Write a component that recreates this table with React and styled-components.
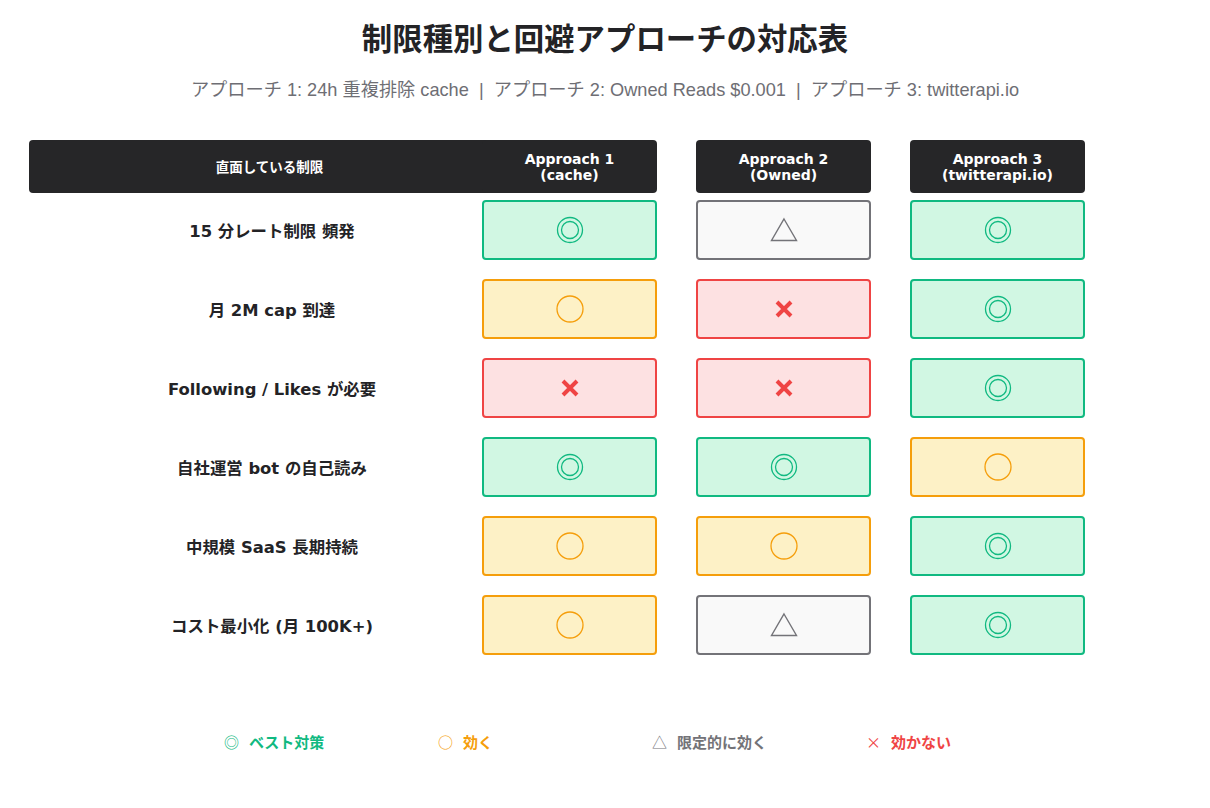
import React from "react";
import styled, { createGlobalStyle } from "styled-components";

const GlobalStyle = createGlobalStyle`
  body {
    margin: 0;
    background: #ffffff;
    font-family: "DejaVu Sans", "Noto Sans CJK JP", sans-serif;
  }
`;

const Page = styled.div`
  width: 1210px;
  height: 808px;
  display: flex;
  flex-direction: column;
  align-items: center;
  background: #ffffff;
`;

const Title = styled.h1`
  margin: 18px 0 0;
  font-family: "Noto Sans CJK JP", sans-serif;
  font-size: 30.4px;
  line-height: 38px;
  font-weight: 700;
  color: #232326;
`;

const Subtitle = styled.p`
  margin: 22px 0 0;
  font-family: "Liberation Sans", "Noto Sans CJK JP", sans-serif;
  font-size: 18.2px;
  line-height: 24px;
  color: #6e6e74;
  white-space: pre;
`;

const Table = styled.div`
  align-self: flex-start;
  margin: 38px 0 0 29px;
  display: flex;
  flex-direction: column;
  gap: 7px;
`;

const Grid = styled.div`
  display: grid;
  grid-template-columns: 414px repeat(3, 175px);
  column-gap: 39px;
  row-gap: 19px;
`;

const HeadCell = styled.div`
  position: relative;
  z-index: ${(p) => (p.$wide ? 0 : 1)};
  height: 53px;
  width: ${(p) => (p.$wide ? "calc(100% + 67px)" : "auto")};
  background: #262628;
  border-radius: 4px;
  color: #ffffff;
  font-weight: 700;
  font-size: ${(p) => (p.$wide ? "13.5px" : "14px")};
  line-height: 16px;
  display: flex;
  flex-direction: column;
  align-items: center;
  justify-content: center;
  text-align: center;
`;

const RowLabel = styled.div`
  width: calc(100% + 72px);
  height: 60px;
  display: flex;
  align-items: center;
  justify-content: center;
  font-size: 16.4px;
  font-weight: 700;
  color: #232326;
`;

const tones = {
  best: { bg: "#d1f7e3", border: "#10b981", fg: "#10b981" },
  good: { bg: "#fdf1c6", border: "#f59e0b", fg: "#f59e0b" },
  part: { bg: "#f9f9f9", border: "#737378", fg: "#737378" },
  none: { bg: "#fde1e2", border: "#ef4444", fg: "#ef4444" },
};

const Cell = styled.div`
  box-sizing: border-box;
  height: 60px;
  border: 2px solid ${(p) => tones[p.$tone].border};
  background: ${(p) => tones[p.$tone].bg};
  border-radius: 4px;
  display: flex;
  align-items: center;
  justify-content: center;
  color: ${(p) => tones[p.$tone].fg};
`;

const Legend = styled.div`
  align-self: flex-start;
  margin: 76px 0 0 224px;
  display: flex;
`;

const LegendItem = styled.div`
  width: 214px;
  display: flex;
  align-items: center;
  gap: 10px;
  font-size: 15px;
  font-weight: 700;
  color: ${(p) => tones[p.$tone].fg};
`;

const LegendMark = styled.span`
  font-family: "Noto Sans CJK JP", sans-serif;
  font-weight: 400;
  font-size: 15px;
  width: 15px;
  text-align: center;
`;

function Mark({ tone }) {
  if (tone === "best")
    return (
      <svg width="28" height="28" viewBox="0 0 28 28">
        <circle cx="14" cy="14" r="12.5" fill="none" stroke="currentColor" strokeWidth="1.3" />
        <circle cx="14" cy="14" r="8.5" fill="none" stroke="currentColor" strokeWidth="1.3" />
      </svg>
    );
  if (tone === "good")
    return (
      <svg width="28" height="28" viewBox="0 0 28 28">
        <circle cx="14" cy="14" r="13" fill="none" stroke="currentColor" strokeWidth="1.3" />
      </svg>
    );
  if (tone === "part")
    return (
      <svg width="28" height="26" viewBox="0 0 28 26">
        <path d="M14 2 L26.5 23.5 L1.5 23.5 Z" fill="none" stroke="currentColor" strokeWidth="1.4" strokeLinejoin="miter" />
      </svg>
    );
  return (
    <svg width="20" height="20" viewBox="0 0 20 20">
      <path d="M3 3 L17 17 M17 3 L3 17" stroke="currentColor" strokeWidth="4" />
    </svg>
  );
}

const rows = [
  { label: "15 分レート制限 頻発", cells: ["best", "part", "best"] },
  { label: "月 2M cap 到達", cells: ["good", "none", "best"] },
  { label: "Following / Likes が必要", cells: ["none", "none", "best"] },
  { label: "自社運営 bot の自己読み", cells: ["best", "best", "good"] },
  { label: "中規模 SaaS 長期持続", cells: ["good", "good", "best"] },
  { label: "コスト最小化 (月 100K+)", cells: ["good", "part", "best"] },
];

const legend = [
  { tone: "best", mark: "◎", text: "ベスト対策" },
  { tone: "good", mark: "○", text: "効く" },
  { tone: "part", mark: "△", text: "限定的に効く" },
  { tone: "none", mark: "×", text: "効かない" },
];

export default function App() {
  return (
    <Page>
      <GlobalStyle />
      <Title>制限種別と回避アプローチの対応表</Title>
      <Subtitle>
        {"アプローチ 1: 24h 重複排除 cache  |  アプローチ 2: Owned Reads $0.001  |  アプローチ 3: twitterapi.io"}
      </Subtitle>
      <Table>
        <Grid>
          <HeadCell $wide>直面している制限</HeadCell>
          <HeadCell>
            <span>Approach 1</span>
            <span>(cache)</span>
          </HeadCell>
          <HeadCell>
            <span>Approach 2</span>
            <span>(Owned)</span>
          </HeadCell>
          <HeadCell>
            <span>Approach 3</span>
            <span>(twitterapi.io)</span>
          </HeadCell>
        </Grid>
        <Grid>
          {rows.map((r) => (
            <React.Fragment key={r.label}>
              <RowLabel>{r.label}</RowLabel>
              {r.cells.map((t, i) => (
                <Cell key={i} $tone={t}>
                  <Mark tone={t} />
                </Cell>
              ))}
            </React.Fragment>
          ))}
        </Grid>
      </Table>
      <Legend>
        {legend.map((l) => (
          <LegendItem key={l.text} $tone={l.tone}>
            <LegendMark>{l.mark}</LegendMark>
            {l.text}
          </LegendItem>
        ))}
      </Legend>
    </Page>
  );
}
